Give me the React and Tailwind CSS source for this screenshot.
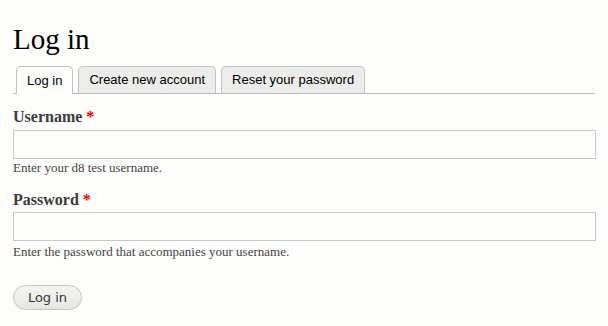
import React from "react";

export default function App() {
  const serif = { fontFamily: '"Liberation Serif", "Times New Roman", serif' };
  return (
    <div className="min-h-[326px] w-[608px] bg-[#fdfdfb] px-[13px] text-[#333]">
      <h1
        className="pt-[21px] text-[29px] leading-[36px] font-normal text-black [font-family:'Liberation_Serif',serif]"
      >
        Log in
      </h1>
      <div className="mt-[9px] flex h-[28px] items-end gap-[5px] border-b border-[#bcbcbc] pl-[3px] [font-family:'Liberation_Sans',Arial,sans-serif] text-[13px]">
        <div className="relative -mb-px flex h-[28px] items-center rounded-t-[5px] border border-b-0 border-[#c4c4c4] bg-[#fdfdfb] px-[10px] text-black">
          Log in
        </div>
        <div className="flex h-[27px] items-center rounded-t-[5px] border border-b-0 border-[#c4c4c4] bg-[#ececea] px-[10px] text-black">
          Create new account
        </div>
        <div className="flex h-[27px] items-center rounded-t-[5px] border border-b-0 border-[#c4c4c4] bg-[#ececea] px-[10px] text-black">
          Reset your password
        </div>
      </div>

      <div style={serif}>
        <label className="mt-[12px] block text-[16px] leading-[22px] font-bold text-[#3b3b3b]">
          Username <span className="text-[#e00]">*</span>
        </label>
        <div className="mt-[2px] h-[29px] w-[583px] border border-[#c8c8c8] bg-[#fdfdfb]" />
        <div className="mt-0 text-[13px] leading-[18px] text-[#444]">
          Enter your d8 test username.
        </div>

        <label className="mt-[12px] block text-[16px] leading-[22px] font-bold text-[#3b3b3b]">
          Password <span className="text-[#e00]">*</span>
        </label>
        <div className="mt-[1px] h-[29px] w-[583px] border border-[#c8c8c8] bg-[#fdfdfb]" />
        <div className="mt-[2px] text-[13px] leading-[18px] text-[#444]">
          Enter the password that accompanies your username.
        </div>
      </div>

      <button className="mt-[24px] flex h-[25px] w-[69px] items-center justify-center rounded-full border border-[#c6c6c6] bg-gradient-to-b from-[#f5f5f2] to-[#e6e6e4] text-[13px] text-[#3a3a3a] [font-family:'DejaVu_Sans',Verdana,sans-serif]">
        Log in
      </button>
    </div>
  );
}
